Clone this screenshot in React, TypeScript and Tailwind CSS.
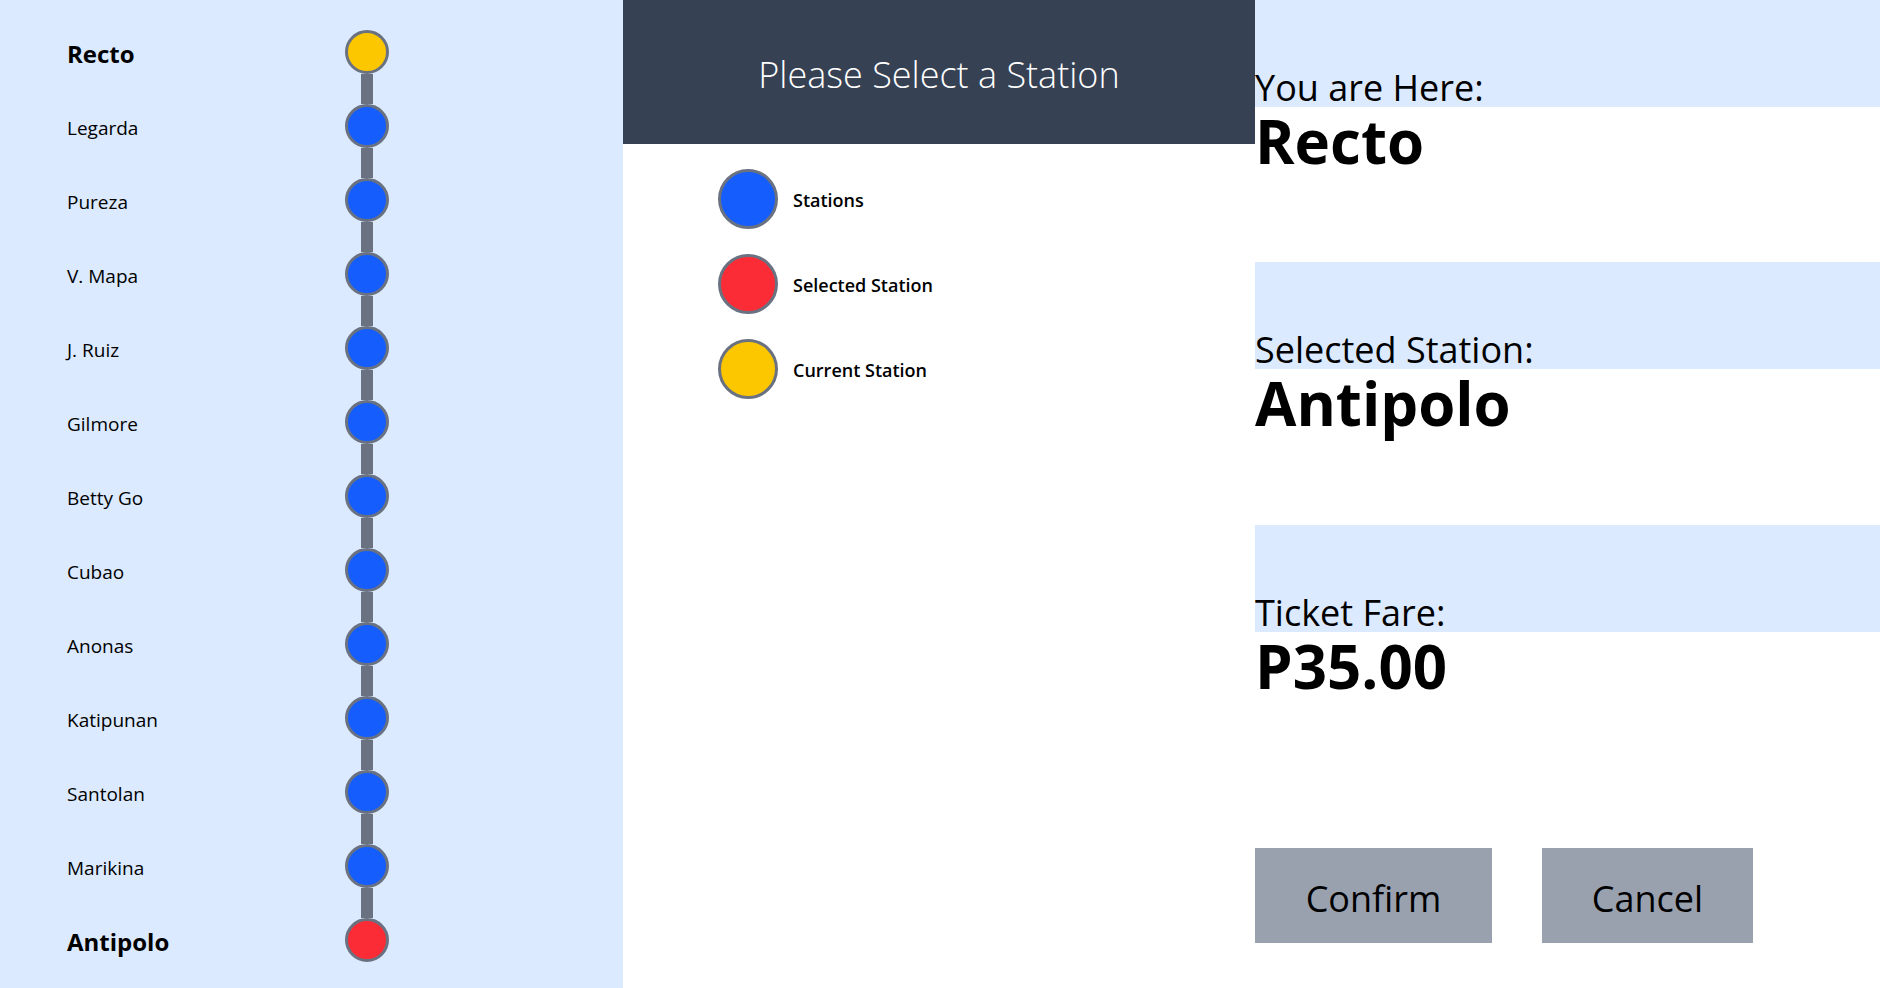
const stations = [
  "Recto",
  "Legarda",
  "Pureza",
  "V. Mapa",
  "J. Ruiz",
  "Gilmore",
  "Betty Go",
  "Cubao",
  "Anonas",
  "Katipunan",
  "Santolan",
  "Marikina",
  "Antipolo",
];

const current = "Recto";
const selected = "Antipolo";

function StationList() {
  return (
    <div className="w-[623px] shrink-0 bg-blue-100 pt-[30px] pl-[67px] flex flex-col">
      {stations.map((name, i) => {
        const isCurrent = name === current;
        const isSelected = name === selected;
        const active = isCurrent || isSelected;
        return (
          <div key={name} className="flex flex-col">
            <div className="flex items-center h-11">
              <span
                className={
                  active
                    ? "w-[278px] pt-1 text-2xl font-bold text-black"
                    : "w-[278px] pt-1 text-[19px] font-medium text-black"
                }
              >
                {name}
              </span>
              <div
                className={
                  isCurrent
                    ? "w-11 h-11 rounded-full border-[3px] border-gray-500 bg-yellow-400"
                    : isSelected
                    ? "w-11 h-11 rounded-full border-[3px] border-gray-500 bg-red-500"
                    : "w-11 h-11 rounded-full border-[3px] border-gray-500 bg-blue-600"
                }
              />
            </div>
            {i < stations.length - 1 && <div className="ml-[294px] w-3 h-[30px] bg-gray-500" />}
          </div>
        );
      })}
    </div>
  );
}

function Legend() {
  const items = [
    { label: "Stations", color: "bg-blue-600" },
    { label: "Selected Station", color: "bg-red-500" },
    { label: "Current Station", color: "bg-yellow-400" },
  ];
  return (
    <div className="w-[632px] shrink-0 bg-white flex flex-col">
      <div className="h-[144px] pt-[5px] bg-gray-700 flex items-center justify-center">
        <h1 className="text-4xl font-light text-white">Please Select a Station</h1>
      </div>
      <div className="pt-[25px] pl-[95px] flex flex-col gap-[25px]">
        {items.map((item) => (
          <div key={item.label} className="flex items-center gap-[15px]">
            <div className={`w-15 h-15 rounded-full border-[3px] border-gray-500 ${item.color}`} />
            <span className="pt-[2px] text-lg font-semibold text-black">{item.label}</span>
          </div>
        ))}
      </div>
    </div>
  );
}

function InfoBlock({ label, value }: { label: string; value: string }) {
  return (
    <div className="h-[262px] flex flex-col">
      <div className="h-[107px] bg-blue-100 flex items-end">
        <span className="text-4xl leading-[38px] text-black">{label}</span>
      </div>
      <span className="mt-[4px] text-6xl font-bold text-black">{value}</span>
    </div>
  );
}

export default function App() {
  return (
    <div className="flex h-[988px] w-full overflow-hidden bg-white font-['Open_Sans',sans-serif]">
      <StationList />
      <Legend />
      <div className="flex-1 flex flex-col">
        <InfoBlock label="You are Here:" value={current} />
        <InfoBlock label="Selected Station:" value={selected} />
        <div className="pt-[1px]">
          <InfoBlock label="Ticket Fare:" value="P35.00" />
        </div>
        <div className="mt-[61px] flex gap-[50px]">
          <button className="w-[237px] h-[95px] pt-[7px] bg-gray-400 text-4xl text-black">Confirm</button>
          <button className="w-[211px] h-[95px] pt-[7px] bg-gray-400 text-4xl text-black">Cancel</button>
        </div>
      </div>
    </div>
  );
}
